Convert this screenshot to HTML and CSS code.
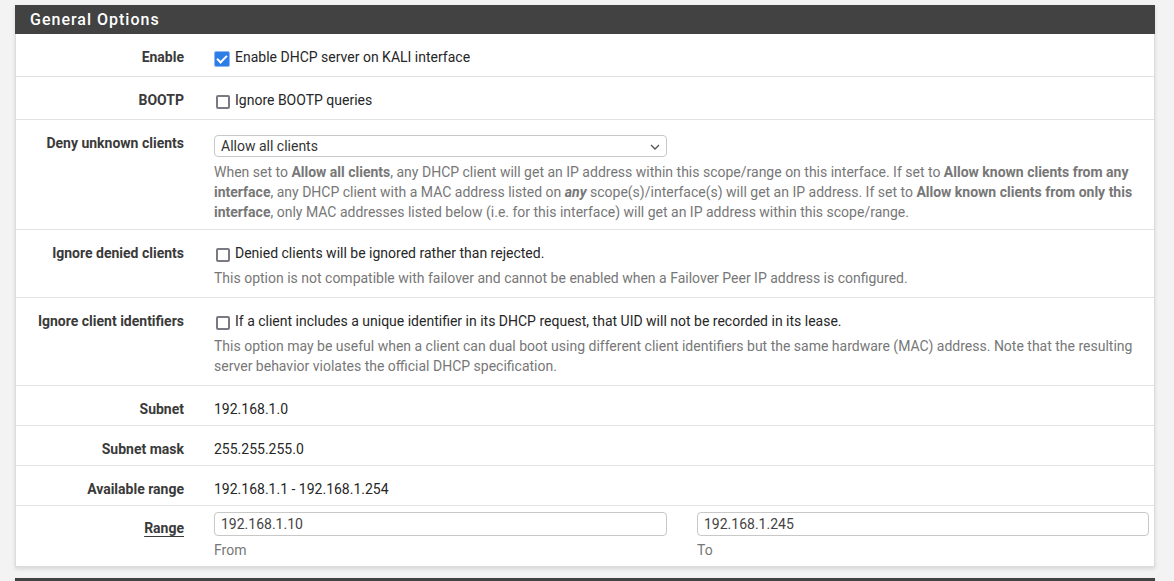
FILE: index.html
```html
<!DOCTYPE html>
<html lang="en">
<head>
<meta charset="utf-8">
<title>General Options</title>
<link rel="stylesheet" href="styles.css">
</head>
<body>
<div class="page">
  <section class="panel">
    <h2 class="panel-title">General Options</h2>

    <div class="row row-check">
      <div class="label">Enable</div>
      <div class="content">
        <label class="check"><input type="checkbox" class="chk" checked> Enable DHCP server on KALI interface</label>
      </div>
    </div>

    <div class="row row-check">
      <div class="label">BOOTP</div>
      <div class="content">
        <label class="check"><input type="checkbox" class="chk"> Ignore BOOTP queries</label>
      </div>
    </div>

    <div class="row row-select">
      <div class="label">Deny unknown clients</div>
      <div class="content">
        <div class="select-wrap">
          <select class="select"><option>Allow all clients</option></select>
          <svg class="chev" width="10" height="6" viewBox="0 0 10 6"><path d="M1 1l4 4 4-4" fill="none" stroke="#555" stroke-width="1.3"/></svg>
        </div>
        <p class="help">When set to <b>Allow all clients</b>, any DHCP client will get an IP address within this scope/range on this interface. If set to <b>Allow known clients from any interface</b>, any DHCP client with a MAC address listed on <b><i>any</i></b> scope(s)/interface(s) will get an IP address. If set to <b>Allow known clients from only this interface</b>, only MAC addresses listed below (i.e. for this interface) will get an IP address within this scope/range.</p>
      </div>
    </div>

    <div class="row row-check">
      <div class="label">Ignore denied clients</div>
      <div class="content">
        <label class="check"><input type="checkbox" class="chk"> Denied clients will be ignored rather than rejected.</label>
        <p class="help">This option is not compatible with failover and cannot be enabled when a Failover Peer IP address is configured.</p>
      </div>
    </div>

    <div class="row row-check">
      <div class="label">Ignore client identifiers</div>
      <div class="content">
        <label class="check"><input type="checkbox" class="chk"> If a client includes a unique identifier in its DHCP request, that UID will not be recorded in its lease.</label>
        <p class="help">This option may be useful when a client can dual boot using different client identifiers but the same hardware (MAC) address. Note that the resulting server behavior violates the official DHCP specification.</p>
      </div>
    </div>

    <div class="row row-static">
      <div class="label">Subnet</div>
      <div class="content">192.168.1.0</div>
    </div>

    <div class="row row-static">
      <div class="label">Subnet mask</div>
      <div class="content">255.255.255.0</div>
    </div>

    <div class="row row-static">
      <div class="label">Available range</div>
      <div class="content">192.168.1.1 - 192.168.1.254</div>
    </div>

    <div class="row row-range">
      <div class="label"><span class="u">Range</span></div>
      <div class="content range">
        <div class="range-col">
          <input class="input" type="text" value="192.168.1.10">
          <span class="sub">From</span>
        </div>
        <div class="range-col">
          <input class="input" type="text" value="192.168.1.245">
          <span class="sub">To</span>
        </div>
      </div>
    </div>
  </section>
  <section class="panel next">
    <h2 class="panel-title">&nbsp;</h2>
  </section>
</div>
</body>
</html>
```
FILE: styles.css
```css
* { box-sizing: border-box; }
html, body { margin: 0; padding: 0; }
body {
  background: #f3f3f3;
  font-family: Roboto, "Noto Sans", "Liberation Sans", sans-serif;
  font-size: 14px;
  line-height: 20px;
  color: #333;
  overflow: hidden;
  height: 581px;
}
.page {
  padding: 5px 0 0 15px;
  width: 1155px;
}
.panel {
  background: #fff;
  border: 1px solid #dcdcdc;
  border-top: 0;
  box-shadow: 0 2px 4px rgba(0,0,0,0.12);
}
.panel.next {
  margin-top: 11px;
}
.panel-title {
  margin: 0 -1px;
  height: 29px;
  background: #424242;
  color: #fff;
  font-size: 16px;
  font-weight: 500;
  letter-spacing: 1px;
  line-height: 29px;
  padding-left: 15px;
}
.row {
  display: grid;
  grid-template-columns: 168px 935px;
  column-gap: 30px;
  padding: 13px 5px 9px 0;
  border-bottom: 1px solid #e2e2e2;
}
.row:last-child { border-bottom: 0; }
.row-static { padding-bottom: 6px; }
.row-select { padding-bottom: 7px; }
.row-range { padding-top: 6px; padding-bottom: 6px; }
.row-range .label { padding-top: 6px; }
.label {
  text-align: right;
  font-weight: 700;
  color: #3a3a3a;
}
.content { color: #262626; }
.check {
  display: flex;
  align-items: center;
  height: 20px;
}
.chk {
  appearance: none;
  -webkit-appearance: none;
  position: relative;
  width: 14px;
  height: 14px;
  margin: 3px 5px 0 2px;
  border: 2px solid #7c7884;
  border-radius: 2px;
  background: #fff;
  flex: none;
}
.chk:checked {
  width: 16px;
  height: 16px;
  margin-left: 0;
  margin-right: 5px;
  background: #2e7de6;
  border: 1px solid #8cb9f2;
}
.chk:checked::after {
  content: "";
  position: absolute;
  left: 4px;
  top: 1px;
  width: 4px;
  height: 8px;
  border: solid #fff;
  border-width: 0 2px 2px 0;
  transform: rotate(45deg);
}
.help {
  margin: 5px 0 0;
  color: #777;
}
.select-wrap {
  position: relative;
  width: 453px;
  margin-top: 2px;
}
.select {
  appearance: none;
  -webkit-appearance: none;
  display: block;
  width: 100%;
  height: 22px;
  border: 1px solid #c8c8c8;
  border-radius: 4px;
  background: #fff;
  font-family: inherit;
  font-size: 14px;
  color: #333;
  padding: 0 6px;
  line-height: 20px;
}
.chev {
  position: absolute;
  right: 7px;
  top: 9px;
}
.range {
  display: grid;
  grid-template-columns: 453px 452px;
  column-gap: 30px;
}
.range-col {
  display: flex;
  flex-direction: column;
}
.input {
  height: 24px;
  border: 1px solid #c8c8c8;
  border-radius: 4px;
  font-family: inherit;
  font-size: 14px;
  color: #444;
  padding: 0 6px;
  margin: 0;
}
.sub {
  color: #777;
  margin-top: 4px;
}
.u {
  text-decoration: underline;
  text-underline-offset: 3px;
}
```
